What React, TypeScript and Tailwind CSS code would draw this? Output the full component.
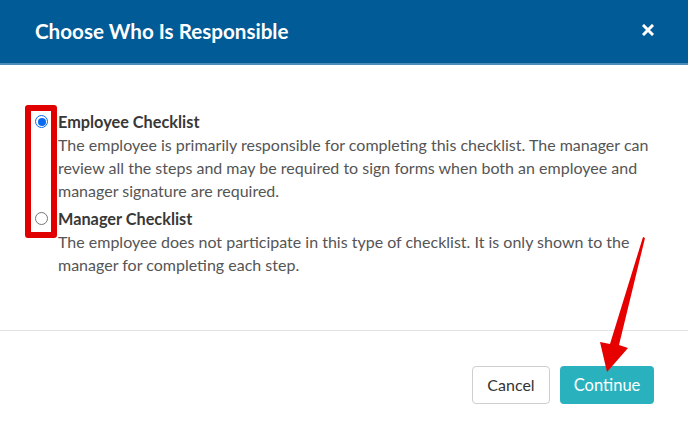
import React from 'react';

const options = [
  {
    title: 'Employee Checklist',
    text: 'The employee is primarily responsible for completing this checklist. The manager can review all the steps and may be required to sign forms when both an employee and manager signature are required.',
    checked: true,
  },
  {
    title: 'Manager Checklist',
    text: 'The employee does not participate in this type of checklist. It is only shown to the manager for completing each step.',
    checked: false,
  },
];

const Radio = ({ checked }: { checked: boolean }) =>
  checked ? (
    <span className="shrink-0 w-[13px] h-[13px] rounded-full border border-[#0b6bf0] bg-white flex items-center justify-center">
      <span className="w-[8px] h-[8px] rounded-full bg-[#0b6bf0]" />
    </span>
  ) : (
    <span className="shrink-0 block w-[13px] h-[13px] rounded-full border border-[#767676] bg-white" />
  );

export default function App() {
  return (
    <div
      className="relative w-[688px] h-[438px] bg-white overflow-hidden"
      style={{ fontFamily: 'Lato, "Open Sans", sans-serif' }}
    >
      {/* header */}
      <div className="h-[65px] bg-[#005b96] border-b-2 border-[#4d8bb8] flex items-center justify-between pl-[35px] pr-[34px]">
        <h1 className="text-white text-[20.6px] font-bold">Choose Who Is Responsible</h1>
        <svg width="12" height="12" viewBox="0 0 12 12" className="mb-[3px]">
          <path d="M2 2 L10 10 M10 2 L2 10" stroke="white" strokeWidth="3" strokeLinecap="square" />
        </svg>
      </div>

      {/* body */}
      <div className="pt-[45px] pl-[35px] pr-[28px] h-[265px]">
        {options.map((o) => (
          <div key={o.title} className="flex items-start gap-[10px] mb-[5px]">
            <div className="shrink-0 pt-[5px]">
              <Radio checked={o.checked} />
            </div>
            <div>
              <div className="text-[16.3px] leading-[23px] font-bold text-[#383838]">{o.title}</div>
              <p className="text-[16px] leading-[23px] text-[#555]">{o.text}</p>
            </div>
          </div>
        ))}
      </div>

      {/* footer */}
      <div className="border-t border-[#e2e2e2] flex justify-end gap-[10px] pt-[35px] pr-[34px]">
        <button className="h-[38px] w-[78px] rounded-[4px] border border-[#cfcfcf] bg-white text-[16px] text-[#333]">
          Cancel
        </button>
        <button className="h-[38px] w-[94px] rounded-[4px] bg-[#29b2be] text-[16.5px] text-white">
          Continue
        </button>
      </div>

      {/* annotations */}
      <div className="absolute left-[25px] top-[105px] w-[32px] h-[133px] border-[6px] border-[#e00000] rounded-[3px]" />
      <svg className="absolute left-0 top-0" width="688" height="438" viewBox="0 0 688 438">
        <path
          d="M643 237 L645 238 L619 345 L628 348 L607 372 L600 342 L610 344 Z"
          fill="#e60000"
        />
      </svg>
    </div>
  );
}
